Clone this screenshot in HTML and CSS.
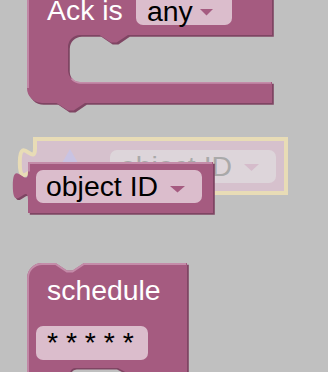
FILE: index.html
```html
<!DOCTYPE html>
<html>
<head>
<meta charset="utf-8">
<link rel="stylesheet" href="styles.css">
</head>
<body>
<div class="workspace">
<svg class="canvas" width="328" height="372" viewBox="0 0 328 372" xmlns="http://www.w3.org/2000/svg">
  <!-- Block 1: C-shaped "Ack is any" -->
  <g class="block">
    <path class="dark" transform="translate(1.8,1.8)" d="M27 -40 H272 V35 H128 l-11.4 7.6 h-5.7 l-11.4 -7.6 H80 a12 12 0 0 0 -12 12 V70 a12 12 0 0 0 12 12 H272 V103 H85 l-11.4 7.6 h-5.7 l-11.4 -7.6 H42 a15 15 0 0 1 -15 -15 Z"/>
    <path class="main" d="M27 -40 H272 V35 H128 l-11.4 7.6 h-5.7 l-11.4 -7.6 H80 a12 12 0 0 0 -12 12 V70 a12 12 0 0 0 12 12 H272 V103 H85 l-11.4 7.6 h-5.7 l-11.4 -7.6 H42 a15 15 0 0 1 -15 -15 Z"/>
    <path class="light" d="M28 -40 V88 M71.5 78.5 a12 12 0 0 0 8.5 4.4 H271"/>
    <rect class="field" x="136" y="-8" width="96" height="33" rx="7"/>
    <text class="label" x="47" y="20">Ack is</text>
    <text class="value" x="147" y="20.5">any</text>
    <polygon class="arrow" points="200,9 213,9 206.5,15.5"/>
  </g>

  <!-- Ghost (faded, selected) block -->
  <g class="ghost">
    <path class="ghost-body" d="M35 139 H286 V193 H35 V177 c0 -19 -15.2 15.2 -15.2 -14.25 s15.2 4.75 15.2 -14.25 Z"/>
    <polygon class="ghost-icon" points="70,149 62,163 78,163"/>
    <rect class="ghost-field" x="110" y="150" width="166" height="33" rx="7"/>
    <text class="ghost-text" x="120" y="176">object ID</text>
    <polygon class="ghost-arrow" points="244,164 259,164 251.5,171"/>
  </g>

  <!-- Dragged reporter block "object ID" -->
  <g class="block">
    <path class="dark" transform="translate(1.8,1.8)" d="M28 162 H213 V213 H28 V200 c0 -19 -15.2 15.2 -15.2 -14.25 s15.2 4.75 15.2 -14.25 Z"/>
    <path class="main" d="M28 162 H213 V213 H28 V200 c0 -19 -15.2 15.2 -15.2 -14.25 s15.2 4.75 15.2 -14.25 Z"/>
    <path class="light" d="M29 171.5 V163 H212"/>
    <rect class="field" x="36" y="170" width="166" height="33" rx="7"/>
    <text class="value" x="46" y="196">object ID</text>
    <polygon class="arrow" points="170,186 185,186 177.5,192.5"/>
  </g>

  <!-- Block 3: "schedule" -->
  <g class="block">
    <path class="dark" transform="translate(1.8,1.8)" d="M27 278 a15 15 0 0 1 15 -15 H55.5 l11.4 7.6 h5.7 l11.4 -7.6 H187 V380 H27 Z"/>
    <path class="main" d="M27 278 a15 15 0 0 1 15 -15 H55.5 l11.4 7.6 h5.7 l11.4 -7.6 H187 V380 H27 Z"/>
    <path class="light" d="M28 380 V278 a14 14 0 0 1 14 -14 H55.5 l11.4 7.6 h5.7 l11.4 -7.6 H186"/>
    <path class="hole-dark" d="M70 373 a6 6 0 0 1 6 -5 H118 l9 5 Z"/>
    <path class="hole" d="M71 374 a6 6 0 0 1 6 -4.5 H117 l9 4.5 Z"/>
    <text class="label" x="47" y="300">schedule</text>
    <rect class="field" x="36" y="326" width="112" height="34" rx="7"/>
    <text class="value" x="47" y="352">* * * * *</text>
  </g>
</svg>
</div>
</body>
</html>
```

FILE: styles.css
```css
html, body {
  margin: 0;
  padding: 0;
  background: #c0c0c0;
}

.workspace {
  width: 328px;
  height: 372px;
  overflow: hidden;
  background: #c0c0c0;
}

.canvas {
  display: block;
  font-family: "Liberation Sans", Arial, sans-serif;
  font-size: 28.4px;
}

.block .main {
  fill: #a55b80;
}

.block .dark {
  fill: #7f4563;
}

.block .light {
  fill: none;
  stroke: #c48ca9;
  stroke-width: 1.8;
}

.block .field {
  fill: #dbbdcc;
}

.label {
  fill: #ffffff;
}

.value {
  fill: #000000;
}

.arrow {
  fill: #a55b80;
}

.hole {
  fill: #c0c0c0;
}

.hole-dark {
  fill: #7f4563;
}

.ghost-body {
  fill: #d6c1cd;
  stroke: #e8dcb6;
  stroke-width: 4;
  stroke-linejoin: miter;
}

.ghost-icon {
  fill: #c9c3e2;
}

.ghost-field {
  fill: #ddd5da;
}

.ghost-text {
  fill: #a9a9a9;
}

.ghost-arrow {
  fill: #d5bccb;
}
```
